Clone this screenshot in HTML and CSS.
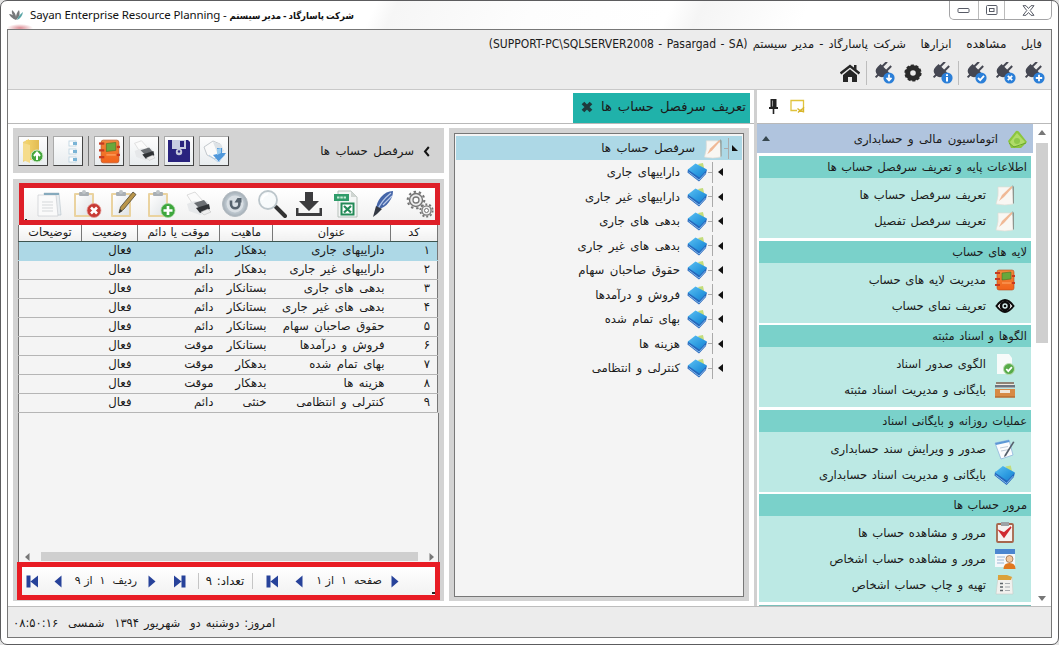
FILE: index.html
```html
<!DOCTYPE html>
<html lang="fa">
<head>
<meta charset="utf-8">
<title>Sayan Enterprise Resource Planning</title>
<link rel="stylesheet" href="styles.css">
</head>
<body>
<svg class="sprite" aria-hidden="true">
  <defs>
    <linearGradient id="blueG" x1="0" y1="0" x2="1" y2="1"><stop offset="0" stop-color="#5cc0f2"/><stop offset=".6" stop-color="#2b9ae0"/><stop offset="1" stop-color="#1d7ccc"/></linearGradient>
    <linearGradient id="paperG" x1="0" y1="0" x2="1" y2="1"><stop offset="0" stop-color="#ffffff"/><stop offset="1" stop-color="#dfe3e6"/></linearGradient>
    <linearGradient id="orangeG" x1="0" y1="0" x2="0" y2="1"><stop offset="0" stop-color="#f08a3c"/><stop offset="1" stop-color="#f2621a"/></linearGradient>
    <linearGradient id="folderG" x1="0" y1="0" x2="1" y2="0"><stop offset="0" stop-color="#f3d46c"/><stop offset="1" stop-color="#e2bb52"/></linearGradient>
    <radialGradient id="discG"><stop offset="0" stop-color="#e9edf1"/><stop offset=".75" stop-color="#b9c3cb"/><stop offset="1" stop-color="#a3adb5"/></radialGradient>
    <symbol id="plug" viewBox="0 0 22 22"><g transform="rotate(45 9 9)" fill="#454752"><rect x="5" y="-1" width="2" height="7"/><rect x="11" y="-1" width="2" height="7"/><path d="M3 5h12v4q0 6-6 6t-6-6z"/><rect x="8" y="14" width="2" height="4"/></g><circle cx="16" cy="16" r="5.600" fill="#2b7fd8"/></symbol>
    <symbol id="book" viewBox="0 0 21 20"><path d="M11 2l5-1 1.500 7-4-2z" fill="#c3dc7c"/><path d="M1 7l-.5 3.500L12 19.500l7-7.500.8-4z" fill="#2467bd"/><path d="M1.500 10l10.500 8 6.500-7" fill="none" stroke="#8dbdea" stroke-width=".9"/><path d="M.8 7.500L8.500 1.500 20 7.500 12.500 15.500z" fill="url(#blueG)"/></symbol>
    <symbol id="notepen" viewBox="0 0 22 22"><path d="M4 3h12l3 3v14q-8 2-17 0 3-8 2-17z" fill="#f9f7f3" stroke="#e3ded6" stroke-width=".7"/><path d="M17.500 2l1.500 1L10 13l-5 4 3-6z" fill="#f0b996"/><path d="M18.500 1l1.500 2v16l-1 1z" fill="#8d958f"/></symbol>
    <symbol id="addrbook" viewBox="0 0 22 22"><rect x="3" y="1" width="17" height="20" rx="2" fill="url(#orangeG)" stroke="#b94a18" stroke-width=".6"/><path d="M8 4l9-1v7l-9 1z" fill="#69a83c" stroke="#3d6d25" stroke-width=".5"/><g fill="#c63a20"><rect x="1" y="3" width="5" height="2"/><rect x="1" y="9" width="5" height="2"/><rect x="1" y="15" width="5" height="2"/><rect x="18" y="6" width="3" height="2"/><rect x="18" y="13" width="3" height="2"/></g><path d="M8 14h9" stroke="#ffa96a"/></symbol>
    <symbol id="clip" viewBox="0 0 30 30"><rect x="2" y="4" width="20" height="24" rx="1" fill="#ead3a0"/><rect x="4" y="6" width="16" height="20" fill="url(#paperG)"/><rect x="7" y="3" width="10" height="4" rx="1" fill="#a9afb4"/><circle cx="12" cy="3" r="2" fill="#bfc4c8"/></symbol>
    <symbol id="printer" viewBox="0 0 28 28"><path d="M3 5l8-3 8 9-9 5z" fill="#fbfbfb" stroke="#cfcfcf" stroke-width=".7"/><path d="M3 14l7-3 13 0 3 5-1 6-9 3-11-4z" fill="#e6e8ea"/><path d="M10 13l10-3 4 5-9 3z" fill="#6b6f73"/><path d="M12 18l13-4 1 5-10 4z" fill="#2f3235"/><path d="M17 22l7-3 3 3-7 3z" fill="#eee" stroke="#bbb" stroke-width=".5"/></symbol>
    <symbol id="first" viewBox="0 0 13 13"><path d="M.5 .5h4v12h-4zM12 .5v12L4.500 6.500z" fill="#27429a"/></symbol>
    <symbol id="prev" viewBox="0 0 8 13"><path d="M7.500 .5v12L.5 6.500z" fill="#27429a"/></symbol>
  </defs>
</svg>
<div class="window">
  <header class="titlebar">
    <svg class="logo" width="16" height="12" viewBox="0 0 16 12"><path d="M8 11Q3 9 1 5q4 0 6 4Q3 5 4 1q4 3 4 8Q8 4 11 1q2 5-2 9z" fill="#77797b"/><path d="M9 11q1-4 6-8-1 6-6 8z" fill="#58a5a6"/></svg>
    <h1 class="wtitle"><span class="en">Sayan Enterprise Resource Planning - </span><bdi class="fa" dir="rtl">شرکت پاسارگاد - مدیر سیستم</bdi></h1>
    <div class="caption">
      <span class="cap"><svg width="14" height="7"><rect x="1" y="1.500" width="11" height="4" rx=".8" fill="#fff" stroke="#575b66"/></svg></span>
      <span class="cap cap-max"><svg width="12" height="11"><rect x=".5" y=".5" width="10.500" height="9" rx="1" fill="#fff" stroke="#575b66"/><rect x="3.500" y="3.500" width="4.500" height="3" fill="none" stroke="#575b66"/></svg></span>
      <span class="cap cap-x"><svg width="13" height="11" viewBox="0 0 13 11"><path d="M1 .7h3l2.500 2.800L9 .7h3L8.200 5.500 12 10.300H9L6.500 7.500 4 10.300H1l3.800-4.800z" fill="#fff" stroke="#575b66"/></svg></span>
    </div>
  </header>
  <div class="frame">
    <div class="ribbon" dir="rtl">
      <nav class="menu">
        <span>فایل</span><span class="wide">مشاهده</span><span>ابزارها</span><span>شرکت پاسارگاد - مدیر سیستم <bdi dir="ltr" class="conn">(SUPPORT-PC\SQLSERVER2008 - Pasargad - SA)</bdi></span>
      </nav>
      <div class="tools">
        <i><svg width="22" height="22"><use href="#plug"/><path d="M16 12.800v6.400M12.800 16h6.400" stroke="#fff" stroke-width="1.800"/></svg></i>
        <i><svg width="22" height="22"><use href="#plug"/><path d="M13.800 13.800l4.400 4.400M18.200 13.800l-4.400 4.400" stroke="#fff" stroke-width="1.800"/></svg></i>
        <i><svg width="22" height="22"><use href="#plug"/><path d="M13 16l2.200 2.200 3.800-4.400" fill="none" stroke="#fff" stroke-width="1.800"/></svg></i>
        <b></b>
        <i><svg width="22" height="22"><use href="#plug"/><path d="M16 12.300v1.700M16 15v4.500" stroke="#fff" stroke-width="2"/></svg></i>
        <i><svg width="18" height="18" viewBox="-9 -9 18 18"><circle r="5.300" fill="none" stroke="#2b2b2b" stroke-width="5"/><circle r="7.600" fill="none" stroke="#2b2b2b" stroke-width="2" stroke-dasharray="3 1.775"/></svg></i>
        <i><svg width="22" height="22"><use href="#plug"/><path d="M16 12.500v5M13.500 15.800l2.500 2.600 2.500-2.600" fill="none" stroke="#fff" stroke-width="1.700"/></svg></i>
        <b></b>
        <i><svg width="20" height="18" viewBox="0 0 20 18"><path d="M.5 9.500L10 2l9.500 7.500" fill="none" stroke="#262626" stroke-width="2.400"/><path d="M3 11L10 5.200l7 5.800V18h-5v-5H8v5H3zM14 1h2.500v5L14 4z" fill="#262626"/></svg></i>
      </div>
    </div>
    <div class="body">
      <main class="work">
        <div class="tabs" dir="rtl">
          <div class="tab"><span>تعریف سرفصل حساب ها</span><svg width="12" height="12" viewBox="0 0 12 12"><path d="M2 2l8 8M10 2l-8 8" stroke="#1f3a3c" stroke-width="3.800"/></svg></div>
        </div>
        <div class="cols">
          <section class="left">
            <div class="panelhead">
              <div class="btns">
                <span class="btn"><svg width="28" height="28"><path d="M4 5l6-3v20l-6 3z" fill="#edd07a"/><path d="M7 3h13v20H7z" fill="url(#folderG)"/><path d="M4 6l7 2v18l-7-3z" fill="#f5dc8c"/><circle cx="18" cy="19" r="6" fill="#45a63c" stroke="#d4ecd0"/><path d="M18 23v-6M15 19l3-3.500 3 3.500" fill="none" stroke="#fff" stroke-width="2"/></svg></span>
                <span class="btn"><svg width="28" height="28"><g fill="#fff" stroke="#b9d1df" stroke-width=".8"><rect x="15" y="4" width="7" height="5"/><rect x="15" y="12" width="7" height="5"/><rect x="15" y="20" width="7" height="5"/></g><g fill="#7ab4d6"><rect x="19" y="5" width="4" height="3"/><rect x="19" y="13" width="4" height="3"/><rect x="19" y="21" width="4" height="3"/></g></svg></span>
                <b></b>
                <span class="btn"><svg width="23" height="25" viewBox="0 0 22 22" preserveAspectRatio="none"><use href="#addrbook"/></svg></span>
                <span class="btn"><svg width="24" height="24"><use href="#printer"/></svg></span>
                <span class="btn"><svg width="24" height="24"><path d="M1 1h20l2 2v20H1z" fill="#29237e"/><rect x="5" y="1" width="14" height="9" fill="#c9cde2"/><rect x="13" y="2" width="4" height="6" fill="#29237e"/><circle cx="12" cy="13" r="3.200" fill="#c5c8da"/><circle cx="12" cy="12.500" r="1.200" fill="#29237e"/></svg></span>
                <span class="btn"><svg width="26" height="26"><path d="M3 9l9-6 7 3 3 7-8 8-8-4z" fill="#fafafa" stroke="#c4c9cd"/><path d="M12 4l8 2 3 7-6 4z" fill="#dde2e6"/><path d="M16 10h5v5h4l-7 9-6-7 4-1z" fill="#4f97da"/><path d="M16 11l4-1v5l-4 2z" fill="#9ccdf0"/><path d="M8 17l9 7 7-7" fill="none" stroke="#a9cdec" stroke-width=".8"/></svg></span>
              </div>
              <div class="crumb" dir="rtl"><svg width="7" height="11" viewBox="0 0 7 11"><path d="M5.800 1L2 5.500 5.800 10" fill="none" stroke="#151515" stroke-width="2"/></svg><span>سرفصل حساب ها</span></div>
            </div>
            <div class="gridpanel">
              <div class="redbar">
                <i><svg width="28" height="28"><path d="M8 3h15l2 22H10z" fill="#e9edf0" stroke="#b3c1ca" stroke-width=".6"/><path d="M2 5h18l2 21H2z" fill="#fafafa" stroke="#c8ccd0" stroke-width=".7"/><path d="M8 3h15v2H8z" fill="#86aabd"/><path d="M6 12h11M6 15h11M6 18h11M6 21h11" stroke="#d5d8da"/></svg></i>
                <i><svg width="30" height="30"><use href="#clip"/><circle cx="22" cy="21.500" r="7" fill="#c83a34" stroke="#e4a09b" stroke-width=".8"/><path d="M19 18.500l6 6M25 18.500l-6 6" stroke="#fff" stroke-width="2.600"/></svg></i>
                <i><svg width="30" height="30"><use href="#clip"/><path d="M24 3l3 2.500L15 20l-5 4 1.500-6z" fill="#b9954a" stroke="#4a4434" stroke-width=".8"/><path d="M10 24l1-4 2.500 2z" fill="#333"/></svg></i>
                <i><svg width="30" height="30"><use href="#clip"/><circle cx="22" cy="21.500" r="7" fill="#3da63c" stroke="#a3d59d" stroke-width=".8"/><path d="M22 17v9M17.500 21.500h9" stroke="#fff" stroke-width="2.700"/></svg></i>
                <i><svg width="28" height="28"><use href="#printer"/></svg></i>
                <i><svg width="28" height="28"><circle cx="14" cy="14" r="12.500" fill="url(#discG)" stroke="#b3bbc1"/><circle cx="14" cy="14" r="8.500" fill="#d9dfe4"/><path d="M10 10.500v3.500a4.200 4.200 0 0 0 8.400 0V12" fill="none" stroke="#56626d" stroke-width="2.600"/><path d="M13.500 12.500h7V8h-4z" fill="#56626d"/></svg></i>
                <i><svg width="30" height="30"><path d="M19 18l9 9" stroke="#333" stroke-width="4" stroke-linecap="round"/><circle cx="11" cy="11" r="9" fill="#f7fafb" stroke="#bcc6cb" stroke-width="1.800"/><path d="M5 11q1-5 6-6" stroke="#fff" stroke-width="2" fill="none"/></svg></i>
                <i><svg width="28" height="28"><path d="M10 2h8v9h6L14 21 4 11h6zM1 18h2.500v5h21v-5H27v8H1z" fill="#3c3c3e"/></svg></i>
                <i><svg width="26" height="28"><path d="M5 1h13l6 6v20H5z" fill="#f4f6f5" stroke="#b7c0ba"/><path d="M18 1v6h6z" fill="#d0d6d2"/><rect x="1" y="4" width="15" height="7" fill="#2f9c6a"/><path d="M4 7.500h9" stroke="#c5ead5" stroke-width="2" stroke-dasharray="2.500 .8"/><rect x="8.500" y="13.500" width="12" height="11" fill="#fff" stroke="#238a57" stroke-width="2"/><path d="M11 16l7 6.500M18 16l-7 6.500" stroke="#238a57" stroke-width="2.200"/></svg></i>
                <i><svg width="24" height="30"><path d="M22 2q-7 0-12 6-5 6-5 13 9-2 13-8 4-5 4-11z" fill="#4465a8"/><path d="M20 4Q10 12 6 22M21 7l-9 9" stroke="#b9c9e9" fill="none" stroke-width="1.300"/><path d="M5 17l6 3-5 5-4 3z" fill="#333843"/></svg></i>
                <i><svg width="28" height="30" fill="none" stroke="#757575"><circle cx="10" cy="11" r="6.500" fill="#ececec" stroke-width="1.400"/><circle cx="10" cy="11" r="8.300" stroke-width="2.100" stroke-dasharray="2.400 2.810"/><circle cx="10" cy="11" r="3" fill="#fff" stroke-width="1.300"/><circle cx="20.500" cy="21.500" r="4.600" fill="#ececec" stroke-width="1.300"/><circle cx="20.500" cy="21.500" r="6.200" stroke-width="1.800" stroke-dasharray="2 1.895"/><circle cx="20.500" cy="21.500" r="2" fill="#fff"/></svg></i>
              </div>
              <table class="grid" dir="rtl">
                <colgroup><col class="c1"><col class="c2"><col class="c3"><col class="c4"><col class="c5"><col class="c6"></colgroup>
                <thead><tr><th>کد</th><th>عنوان</th><th>ماهیت</th><th>موقت یا دائم</th><th>وضعیت</th><th>توضیحات</th></tr></thead>
                <tbody>
                  <tr class="sel"><td>۱</td><td>داراییهای جاری</td><td>بدهکار</td><td>دائم</td><td>فعال</td><td></td></tr>
                  <tr><td>۲</td><td>داراییهای غیر جاری</td><td>بدهکار</td><td>دائم</td><td>فعال</td><td></td></tr>
                  <tr><td>۳</td><td>بدهی های جاری</td><td>بستانکار</td><td>دائم</td><td>فعال</td><td></td></tr>
                  <tr><td>۴</td><td>بدهی های غیر جاری</td><td>بستانکار</td><td>دائم</td><td>فعال</td><td></td></tr>
                  <tr><td>۵</td><td>حقوق صاحبان سهام</td><td>بستانکار</td><td>دائم</td><td>فعال</td><td></td></tr>
                  <tr><td>۶</td><td>فروش و درآمدها</td><td>بستانکار</td><td>موقت</td><td>فعال</td><td></td></tr>
                  <tr><td>۷</td><td>بهای تمام شده</td><td>بدهکار</td><td>موقت</td><td>فعال</td><td></td></tr>
                  <tr><td>۸</td><td>هزینه ها</td><td>بدهکار</td><td>موقت</td><td>فعال</td><td></td></tr>
                  <tr><td>۹</td><td>کنترلی و انتظامی</td><td>خنثی</td><td>دائم</td><td>فعال</td><td></td></tr>
                </tbody>
              </table>
              <div class="hscroll"><svg width="5" height="8"><path d="M4.500 0v8L0 4z" fill="#777"/></svg><span class="hthumb"></span><svg width="5" height="8"><path d="M.5 0v8L5 4z" fill="#777"/></svg></div>
              <div class="pager">
                <svg width="13" height="13"><use href="#first"/></svg>
                <svg width="8" height="13"><use href="#prev"/></svg>
                <span dir="rtl">ردیف &nbsp;۱&nbsp; از ۹</span>
                <svg class="flip" width="8" height="13"><use href="#prev"/></svg>
                <svg class="flip" width="13" height="13"><use href="#first"/></svg>
                <b></b>
                <span class="count" dir="rtl">تعداد: ۹</span>
                <b></b>
                <svg width="13" height="13"><use href="#first"/></svg>
                <svg width="8" height="13"><use href="#prev"/></svg>
                <span dir="rtl">صفحه &nbsp;۱&nbsp; از ۱</span>
                <svg class="flip" width="8" height="13"><use href="#prev"/></svg>
              </div>
            </div>
          </section>
          <section class="treepanel">
            <div class="tree" dir="rtl">
              <div class="node root"><svg class="arr" width="6" height="6"><path d="M0 0l6 6H0z" fill="#111"/></svg><u></u><s></s><svg class="nico" width="22" height="21"><use href="#notepen"/></svg><span>سرفصل حساب ها</span></div>
              <div class="node"><svg class="arr" width="5" height="8"><path d="M5 0v8L0 4z" fill="#111"/></svg><u></u><s></s><svg class="nico" width="21" height="20"><use href="#book"/></svg><span>داراییهای جاری</span></div>
              <div class="node"><svg class="arr" width="5" height="8"><path d="M5 0v8L0 4z" fill="#111"/></svg><u></u><s></s><svg class="nico" width="21" height="20"><use href="#book"/></svg><span>داراییهای غیر جاری</span></div>
              <div class="node"><svg class="arr" width="5" height="8"><path d="M5 0v8L0 4z" fill="#111"/></svg><u></u><s></s><svg class="nico" width="21" height="20"><use href="#book"/></svg><span>بدهی های جاری</span></div>
              <div class="node"><svg class="arr" width="5" height="8"><path d="M5 0v8L0 4z" fill="#111"/></svg><u></u><s></s><svg class="nico" width="21" height="20"><use href="#book"/></svg><span>بدهی های غیر جاری</span></div>
              <div class="node"><svg class="arr" width="5" height="8"><path d="M5 0v8L0 4z" fill="#111"/></svg><u></u><s></s><svg class="nico" width="21" height="20"><use href="#book"/></svg><span>حقوق صاحبان سهام</span></div>
              <div class="node"><svg class="arr" width="5" height="8"><path d="M5 0v8L0 4z" fill="#111"/></svg><u></u><s></s><svg class="nico" width="21" height="20"><use href="#book"/></svg><span>فروش و درآمدها</span></div>
              <div class="node"><svg class="arr" width="5" height="8"><path d="M5 0v8L0 4z" fill="#111"/></svg><u></u><s></s><svg class="nico" width="21" height="20"><use href="#book"/></svg><span>بهای تمام شده</span></div>
              <div class="node"><svg class="arr" width="5" height="8"><path d="M5 0v8L0 4z" fill="#111"/></svg><u></u><s></s><svg class="nico" width="21" height="20"><use href="#book"/></svg><span>هزینه ها</span></div>
              <div class="node"><svg class="arr" width="5" height="8"><path d="M5 0v8L0 4z" fill="#111"/></svg><u></u><s></s><svg class="nico" width="21" height="20"><use href="#book"/></svg><span>کنترلی و انتظامی</span></div>
            </div>
          </section>
        </div>
      </main>
      <div class="splitter"></div>
      <aside class="side">
        <div class="sidebar-tools"><svg width="9" height="15" viewBox="0 0 9 15"><path d="M1.500 0h6v8H9v2H5.300v5H3.700v-5H0V8h1.500z" fill="#222"/><path d="M3.500 1.500v6" stroke="#999"/></svg><svg width="15" height="15"><path d="M7 11.500H1V1.500h12.500V9" fill="none" stroke="#e0c33c" stroke-width="1.300"/><path d="M7.500 9.500l2.500 2-2 2M13.500 8v5.500M13 9.500l-3 2 3 1" fill="none" stroke="#d8b52a" stroke-width="1.400"/></svg></div>
        <div class="sidebody">
          <div class="acc" dir="rtl">
            <div class="acchead"><svg width="21" height="20" viewBox="0 0 21 20"><path d="M1 12l8-10q2-1 4 2l7 9-6 6H4z" fill="#8cc63e"/><path d="M3 13l7-9 8 9-5 4H5z" fill="#b0dc68"/><circle cx="10" cy="12" r="3" fill="#8ec84a"/><path d="M2 14l5 4 12-4" stroke="#6aa531" fill="none"/></svg><span>اتوماسیون مالی و حسابداری</span><svg class="up" width="8" height="5"><path d="M0 5h8L4 0z" fill="#37474f"/></svg></div>
            <div class="group"><h2>اطلاعات پایه و تعریف سرفصل حساب ها</h2>
              <p><svg width="22" height="22"><use href="#notepen"/></svg><span>تعریف سرفصل حساب ها</span></p>
              <p><svg width="22" height="22"><use href="#notepen"/></svg><span>تعریف سرفصل تفصیل</span></p></div>
            <div class="group"><h2>لایه های حساب</h2>
              <p><svg width="22" height="22"><use href="#addrbook"/></svg><span>مدیریت لایه های حساب</span></p>
              <p><svg width="22" height="22"><path d="M2.500 11Q7 5 11 5T19.500 11Q15 17 11 17T2.500 11z" fill="#fff" stroke="#0c0c0c" stroke-width="2"/><circle cx="11" cy="11" r="5.300" fill="#0c0c0c"/><circle cx="11" cy="11" r="2.700" fill="#d8f0ee"/><circle cx="11" cy="11" r="1.300" fill="#0c0c0c"/></svg><span>تعریف نمای حساب</span></p></div>
            <div class="group"><h2>الگوها و اسناد مثبته</h2>
              <p><svg width="22" height="22"><path d="M3 1h12l3 4v16H3z" fill="#f7fbfa"/><circle cx="15" cy="16" r="5.500" fill="#56ab48" stroke="#b9ddb1"/><path d="M12.300 16l2 2.200 3.600-4" fill="none" stroke="#fff" stroke-width="1.800"/></svg><span>الگوی صدور اسناد</span></p>
              <p><svg width="22" height="22"><rect x="2" y="3" width="18" height="6" fill="#efe9df"/><rect x="2" y="3" width="18" height="2" fill="#8f8375"/><rect x="1" y="6" width="20" height="2.500" fill="#6c7680"/><rect x="1" y="10" width="20" height="8.500" fill="#d78a45"/><path d="M6 11h10v3H6z" fill="#f0e6da"/><path d="M1 18h20" stroke="#a95f27"/></svg><span>بایگانی و مدیریت اسناد مثبته</span></p></div>
            <div class="group"><h2>عملیات روزانه و بایگانی اسناد</h2>
              <p><svg width="22" height="22"><path d="M1 5l14-3 4 15-12 4z" fill="#fbfcfe" stroke="#8fb5dd" stroke-width=".8"/><path d="M1 5l14-3 .5 2L2 7z" fill="#5c98d6"/><path d="M6 10l8-1.500M7 13l8-1.500" stroke="#c3cdd8"/><path d="M20.500 4L12 18l-2 1 .5-2L19 3.500z" fill="#555f6b"/></svg><span>صدور و ویرایش سند حسابداری</span></p>
              <p><svg width="22" height="22"><use href="#book"/></svg><span>بایگانی و مدیریت اسناد حسابداری</span></p></div>
            <div class="group tall"><h2>مرور حساب ها</h2>
              <p><svg width="22" height="22"><rect x="3" y="2" width="16" height="18" rx="1" fill="#f6f2f0" stroke="#a6664c" stroke-width="1.800"/><rect x="7" y="0" width="8" height="4" fill="#9da2a5"/><path d="M5.500 9l4.500 6 7-10-7 6z" fill="#d02a30" stroke="#d02a30" stroke-width="1.400"/></svg><span>مرور و مشاهده حساب ها</span></p>
              <p><svg width="22" height="22"><rect x="1" y="1" width="20" height="18" fill="#f5f8fb"/><rect x="1" y="1" width="20" height="5" fill="#4b86cf"/><path d="M3 9h8M3 12h7M3 15h7" stroke="#9bb7d4"/><circle cx="15.500" cy="11" r="3.500" fill="#f3c9a0" stroke="#8d5b34" stroke-width=".7"/><path d="M9.500 21q0-6 6-6t6 6z" fill="#e0781f"/></svg><span>مرور و مشاهده حساب اشخاص</span></p>
              <p><svg width="22" height="22"><path d="M4 3h14l1 17H2z" fill="#f1f1ee" stroke="#c9cbc6" stroke-width=".6"/><path d="M4 1h9l5 2-1 3H4z" fill="#dba23a"/><path d="M6 9.500h3M6 13h3M6 16.500h3" stroke="#5d6468" stroke-width="1.500"/><path d="M11 9.500h5M11 13h5M11 16.500h5" stroke="#a8adb0"/></svg><span>تهیه و چاپ حساب اشخاص</span></p></div>
            <div class="group more"></div>
          </div>
          <div class="vscroll"><svg width="8" height="5"><path d="M0 5h8L4 0z" fill="#777"/></svg><span class="vthumb"></span><svg width="8" height="5"><path d="M0 0h8L4 5z" fill="#777"/></svg></div>
        </div>
      </aside>
    </div>
    <footer class="status"><span dir="rtl">امروز: دوشنبه دو&nbsp; شهریور ۱۳۹۴&nbsp; شمسی&nbsp; ۰۸:۵۰:۱۶</span></footer>
  </div>
</div>
</body>
</html>
```
FILE: styles.css
```css
* { box-sizing: border-box; }
body { margin: 0; width: 1059px; height: 645px; overflow: hidden; background: #e3e3e3; font: 11.7px/16px "DejaVu Sans", sans-serif; word-spacing: 1.8px; color: #1a1a1a; }
svg { display: block; flex: none; }
span { white-space: nowrap; }
.sprite { position: absolute; width: 0; height: 0; }
.window { width: 1059px; height: 645px; border: 1px solid #5c5c5e; border-radius: 7px; background: #fff; padding: 0 6px 6px; display: flex; flex-direction: column; }
.titlebar { height: 28px; flex: none; display: flex; align-items: flex-start; background: radial-gradient(ellipse 13px 4px at 13px 27px, #dc8c94, #dc8c9400), linear-gradient(115deg, #fff 35%, #f6f6f6 37%, #fdfdfd 50%, #fff 63%, #f5f5f5 66%, #fff 76%); }
.logo { margin: 8px 6px 0 1px; }
.wtitle { margin: 6px 0 0; font-weight: normal; font-size: 12px; line-height: 16px; white-space: pre; color: #111; word-spacing: 0; }
.wtitle .en { font-family: "Noto Sans", sans-serif; font-size: 11.5px; letter-spacing: -.12px; }
.wtitle .fa { font-family: "DejaVu Sans Condensed", "DejaVu Sans", sans-serif; font-weight: bold; font-size: 9.5px; word-spacing: -1px; }
.caption { margin: 0 0 0 auto; display: flex; border: 1px solid #a4a4a6; border-top: 0; border-radius: 0 0 5px 5px; height: 19px; width: 103px; }
.cap { width: 29px; display: flex; align-items: center; justify-content: center; border-right: 1px solid #bbb; }
.cap-max { width: 26px; }
.cap-x { flex: 1; border: 0; }
.frame { flex: 1; min-height: 0; border: 1px solid #777; display: flex; flex-direction: column; background: #fff; }
.ribbon { height: 60px; flex: none; background: #ececec; border-bottom: 1px solid #c9c9c9; }
.menu { height: 28px; padding: 6px 9px 0 0; display: flex; gap: 14.6px; font-size: 11.5px; word-spacing: 1.5px; }
.wide { font-size: 12.2px; }
.tools { display: flex; align-items: center; height: 30px; padding-right: 3px; }
.tools i { width: 29px; display: flex; justify-content: center; }
.tools b { width: 1px; height: 24px; margin: 0 2px; background: #bdbdbd; }
.conn { font-family: "DejaVu Sans Condensed", sans-serif; font-size: 12px; word-spacing: 1px; }
.body { flex: 1; min-height: 0; display: flex; }
.work { width: 746px; display: flex; flex-direction: column; }
.tabs { height: 34px; flex: none; border-bottom: 1px solid #b9b9b9; padding: 3px 4px 0 0; display: flex; }
.tab { width: 177px; height: 30px; background: #20b2aa; display: flex; align-items: center; justify-content: space-between; padding: 0 4px 2px 8px; font-size: 13.1px; }
.cols { flex: 1; min-height: 0; display: flex; gap: 5px; padding: 4px 5px 5px; }
.left { width: 431px; display: flex; flex-direction: column; gap: 6px; }
.panelhead { height: 45px; flex: none; background: #d3d3d3; display: flex; justify-content: space-between; padding: 8px 14px 0 5px; }
.btns { display: flex; gap: 5px; }
.btns b { width: 1px; height: 30px; background: #777; }
.btn { width: 30px; height: 30px; background: linear-gradient(#fdfdfd, #e9edef); border: 1px solid #aaa; border-right-color: #444; border-bottom-color: #444; display: flex; align-items: center; justify-content: center; }
.crumb { display: flex; align-items: center; gap: 9px; height: 30px; }
.gridpanel { flex: 1; min-height: 0; background: #d3d3d3; padding: 4px 4px 1px; display: flex; flex-direction: column; }
.redbar { margin: 0 0 0 2px; height: 42px; flex: none; border: 5px solid #de1f28; background: linear-gradient(#222, #222) 1px 100% / 2px 1px no-repeat, linear-gradient(#fff, #f1f1f1); display: grid; grid-template-columns: repeat(11, 37px); align-items: center; justify-items: center; padding-left: 7px; }
.grid { width: 420px; margin-left: 1px; table-layout: fixed; border-collapse: collapse; border-left: 1px solid #777; border-right: 1px solid #777; background: #f4f4f4; }
.c1 { width: 47px; } .c2 { width: 118px; } .c3 { width: 53px; } .c4 { width: 82px; } .c5 { width: 56px; }
.grid th { height: 16px; padding: 0; font-size: 11.3px; word-spacing: .5px; font-weight: normal; line-height: 14px; background: linear-gradient(#fff, #f0f0f0); border-left: 1px solid #777; border-bottom: 1px solid #3d5550; }
.grid td { height: 19px; padding: 0 6px 0 0; line-height: 17px; border-bottom: 1px solid #b5b5b5; white-space: nowrap; }
.grid td:first-child { padding-right: 7px; }
.grid .sel td { background: #add8e6; border-bottom-color: #add8e6; }
.hscroll { flex: 1; margin: 0 1px; border: solid #777; border-width: 0 1px; background: #f4f4f4; display: flex; align-items: flex-end; gap: 11px; padding: 0 4px 1px 6px; }
.hthumb { flex: 1; height: 9px; background: #cfcfcf; }
.pager { height: 38px; flex: none; border: 5px solid #e81c24; background: linear-gradient(#222, #222) 100% calc(100% - 1px) / 3px 2px no-repeat, linear-gradient(#fff, #f2f2f2); display: grid; grid-template-columns: 20px 32px 64px 28px 26px 12px 42px 12px 28px 26px 74px 18px; align-items: center; justify-items: center; font-size: 11px; word-spacing: 0; }
.pager b { width: 1px; height: 16px; background: #c5c5c5; }
.count { font-size: 11.7px; word-spacing: 1px; }
.flip { transform: scaleX(-1); }
.treepanel { width: 300px; background: #d3d3d3; padding: 5px; }
.tree { height: 464px; border: 1px solid #777; background: #f4f4f4; padding: 2px 1px; }
.node { height: 24.5px; display: flex; align-items: center; padding-right: 19px; }
.root { background: #add8e6; height: 24px; padding-right: 4px; }
.arr { margin-left: 5px; }
.root .arr { margin-left: 3px; }
.node u { height: 21px; width: 1px; background: #aaa; }
.node s { width: 4px; height: 1px; background: #aaa; }
.nico { margin: 0 0 0 7px; }
.splitter { width: 3px; background: #d0d0d0; }
.side { flex: 1; min-width: 0; display: flex; flex-direction: column; }
.sidebar-tools { height: 34px; flex: none; border-bottom: 1px solid #b9b9b9; display: flex; align-items: center; gap: 12px; padding-left: 12px; }
.sidebody { flex: 1; min-height: 0; display: flex; overflow: hidden; }
.acc { width: 276px; }
.acchead { height: 29px; background: #b0c4de; display: flex; align-items: center; gap: 9px; padding: 0 5px 0 5px; margin-bottom: 3px; }
.up { margin-right: auto; }
.group { margin: 0 2px 2.500px; height: 82px; background: #bce9e4; }
.group h2 { margin: 0 0 4px; height: 22px; background: #7ad1ca; font-size: 11.4px; word-spacing: 1px; font-weight: normal; line-height: 22px; padding-right: 4px; }
.group p { margin: 0; height: 26px; display: flex; align-items: center; gap: 8px; padding-right: 15px; font-size: 11.6px; word-spacing: 1px; }
.group.tall { height: 108px; }
.group.more { background: #7abfb9; }
.vscroll { flex: 1; display: flex; flex-direction: column; align-items: center; padding: 6px 0 5px; }
.vthumb { width: 12px; height: 200px; margin: 8px 0 auto; background: #cfcfcf; }
.status { height: 31px; flex: none; border-top: 1px solid #bdbdbd; background: #ececec; padding: 8px 5px; font-size: 11.6px; word-spacing: 1.2px; }
```
